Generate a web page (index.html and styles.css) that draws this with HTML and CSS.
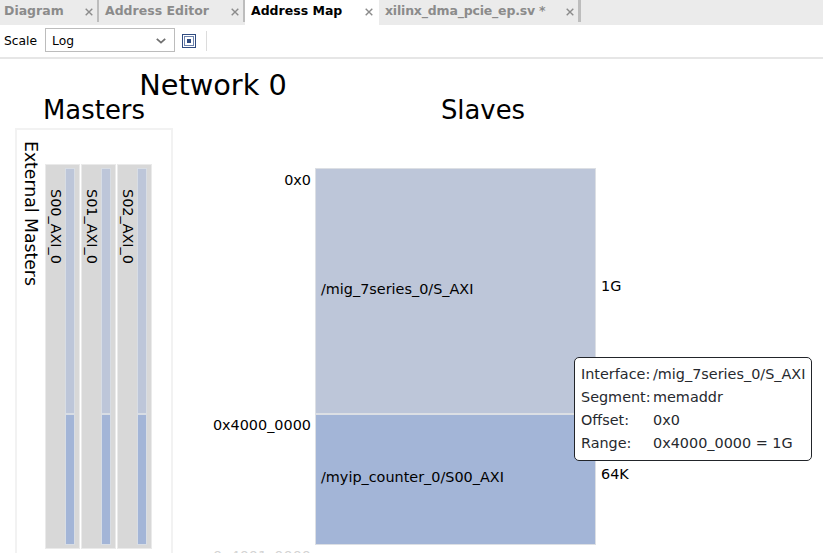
FILE: index.html
```
<!DOCTYPE html>
<html lang="en">
<head>
<meta charset="utf-8">
<title>Address Map</title>
<link rel="stylesheet" href="styles.css">
</head>
<body>
<nav class="tabs">
  <div class="tab t1"><span class="name">Diagram</span><svg class="close" viewBox="0 0 8 8"><path d="M.7.7 7.3 7.3M7.3.7.7 7.3"/></svg></div>
  <div class="tab t2"><span class="name">Address Editor</span><svg class="close" viewBox="0 0 8 8"><path d="M.7.7 7.3 7.3M7.3.7.7 7.3"/></svg></div>
  <div class="tab t3 active"><span class="name">Address Map</span><svg class="close" viewBox="0 0 8 8"><path d="M.7.7 7.3 7.3M7.3.7.7 7.3"/></svg></div>
  <div class="tab t4"><span class="name">xilinx_dma_pcie_ep.sv *</span><svg class="close" viewBox="0 0 8 8"><path d="M.7.7 7.3 7.3M7.3.7.7 7.3"/></svg></div>
</nav>
<div class="toolbar">
  <span class="scale">Scale</span>
  <div class="select"><span class="value">Log</span><svg class="chevron" viewBox="0 0 10 6"><path d="M.8.8 5 4.6 9.2.8"/></svg></div>
  <svg class="fit" viewBox="0 0 14 14"><rect x=".5" y=".5" width="13" height="13"/><rect class="mid" x="2.5" y="2.5" width="9" height="9"/><rect class="dot" x="5" y="5" width="4" height="4"/></svg>
  <i class="sep"></i>
</div>
<main class="canvas">
  <h1>Network 0</h1>
  <div class="columns">
    <section class="masters">
      <h2>Masters</h2>
      <div class="group">
        <div class="group-name">External Masters</div>
        <div class="master"><span>S00_AXI_0</span><div class="bar"><i class="mem"></i><i class="io"></i></div></div>
        <div class="master"><span>S01_AXI_0</span><div class="bar"><i class="mem"></i><i class="io"></i></div></div>
        <div class="master"><span>S02_AXI_0</span><div class="bar"><i class="mem"></i><i class="io"></i></div></div>
      </div>
    </section>
    <section class="slaves">
      <h2>Slaves</h2>
      <div class="map">
        <div class="offset">0x0</div><div class="segment mem">/mig_7series_0/S_AXI</div><div class="size">1G</div>
        <div class="offset second">0x4000_0000</div><div class="segment io">/myip_counter_0/S00_AXI</div><div class="size second">64K</div>
        <div class="offset end">0x4001_0000</div>
      </div>
    </section>
  </div>
</main>
<dl class="tooltip">
  <dt>Interface:</dt><dd>/mig_7series_0/S_AXI</dd>
  <dt>Segment:</dt><dd>memaddr</dd>
  <dt>Offset:</dt><dd>0x0</dd>
  <dt>Range:</dt><dd>0x4000_0000 = 1G</dd>
</dl>
</body>
</html>
```
FILE: styles.css
```
* { box-sizing: border-box; }
body {
  margin: 0;
  height: 553px;
  display: flex;
  flex-direction: column;
  overflow: hidden;
  background: #fff;
  color: #000;
  font-family: "DejaVu Sans", sans-serif;
}
.tabs { display: flex; flex: none; height: 25px; background: #ebebeb; }
.tab {
  display: flex;
  justify-content: space-between;
  height: 25px;
  padding: 0 4px 0 5px;
  color: #8b8b8b;
  font-weight: bold;
  font-size: 12.5px;
  line-height: 21px;
  white-space: nowrap;
  border-style: solid;
  border-image: linear-gradient(#bdbdbd 21px, #ebebeb 21px) 1;
  border-width: 0 2px 0 0;
}
.t1 { width: 99px; padding-left: 4px; }
.t2 { width: 146px; padding-left: 6px; }
.t3 { width: 134px; padding: 0 6px; border: 0; }
.t4 { width: 202px; padding-left: 6px; border-right-width: 3px; }
.t4 .name { letter-spacing: -0.19px; }
.active { background: #fff; color: #000; }
.close { width: 8px; height: 8px; margin-top: 8px; fill: none; stroke: #8b8b8b; stroke-width: 1.4; }
.toolbar {
  display: flex;
  flex: none;
  align-items: center;
  height: 34px;
  padding: 0 0 2px 4px;
  border-bottom: 2px solid #e6e6e6;
  font-size: 12.3px;
}
.scale { width: 41px; padding-top: 2px; }
.value { padding-top: 1px; }
.select {
  display: flex;
  align-items: center;
  justify-content: space-between;
  width: 130px;
  height: 24px;
  padding: 0 8px 0 6px;
  border: 1px solid #bcbcbc;
}
.chevron { width: 10px; height: 6px; margin-top: 2px; fill: none; stroke: #707070; stroke-width: 1.8; }
.fit { width: 14px; height: 14px; margin: 2px 0 0 7px; fill: #fff; stroke: #2f4b80; stroke-width: 1; }
.fit .mid { stroke: #6d83ad; }
.fit .dot { fill: #2f4b80; stroke: none; }
.sep { width: 1px; height: 20px; margin: 2px 0 0 10px; background: #dcdcdc; }
.canvas { flex: 1; min-height: 0; overflow: hidden; padding-top: 9px; font-size: 14.4px; }
h1, h2 { margin: 0; font-weight: normal; }
h1 { width: 426px; height: 27px; font-size: 28.8px; line-height: 34px; text-align: center; }
h2 { height: 33px; font-size: 25.9px; line-height: 30px; text-align: center; }
.columns { display: flex; padding-left: 15px; }
.masters { width: 158px; }
.group { display: flex; gap: 1px; height: 440px; padding: 34px 0 0 2px; border: 2px solid #f2f2f2; }
.group-name { width: 23px; margin: -23px 2px 0 0; font-size: 17.25px; line-height: 23px; writing-mode: vertical-rl; white-space: nowrap; }
.master {
  display: flex;
  width: 35px;
  height: 385px;
  padding: 3px 4px 0 1px;
  justify-content: space-between;
  background: #d8d8d8;
  border: 1px solid #eaeaea;
}
.master span { width: 17px; padding-top: 21px; line-height: 17px; writing-mode: vertical-rl; }
.bar { width: 10px; height: 377px; }
.bar i { display: block; border: 1px solid #d8dde4; }
.bar .mem { height: 246px; }
.bar .io { height: 131px; }
.mem { background: #bdc6d9; }
.io { background: #a3b5d7; }
.slaves { flex: 1; }
.slaves h2 { width: 620px; }
.map { display: grid; grid-template-columns: 142px 281px 60px; grid-template-rows: 246px 131px 20px; padding-top: 40px; }
.offset { padding-right: 4px; line-height: 17px; text-align: right; padding-top: 4px; }
.offset.second { padding-top: 3px; }
.segment { display: flex; align-items: center; padding: 0 0 4px 5px; border: 1px solid #dcdfe4; }
.segment.io { border-top-width: 2px; margin-top: -1px; padding-bottom: 6px; }
.size { display: flex; align-items: center; padding: 0 0 10px 5px; }
.size.second { padding-bottom: 12px; }
.offset.end { color: #d4d4d4; padding-top: 3px; }
.tooltip {
  position: absolute;
  left: 574px;
  top: 357px;
  width: 238px;
  height: 104px;
  display: grid;
  grid-template-columns: 72px 1fr;
  grid-auto-rows: 23px;
  margin: 0;
  padding: 5px 0 0 6px;
  border: 1px solid #22252a;
  border-radius: 5px;
  background: #fff;
  color: #26292e;
  font-size: 14.4px;
  line-height: 23px;
  white-space: nowrap;
}
.tooltip dd { margin: 0; }
```
